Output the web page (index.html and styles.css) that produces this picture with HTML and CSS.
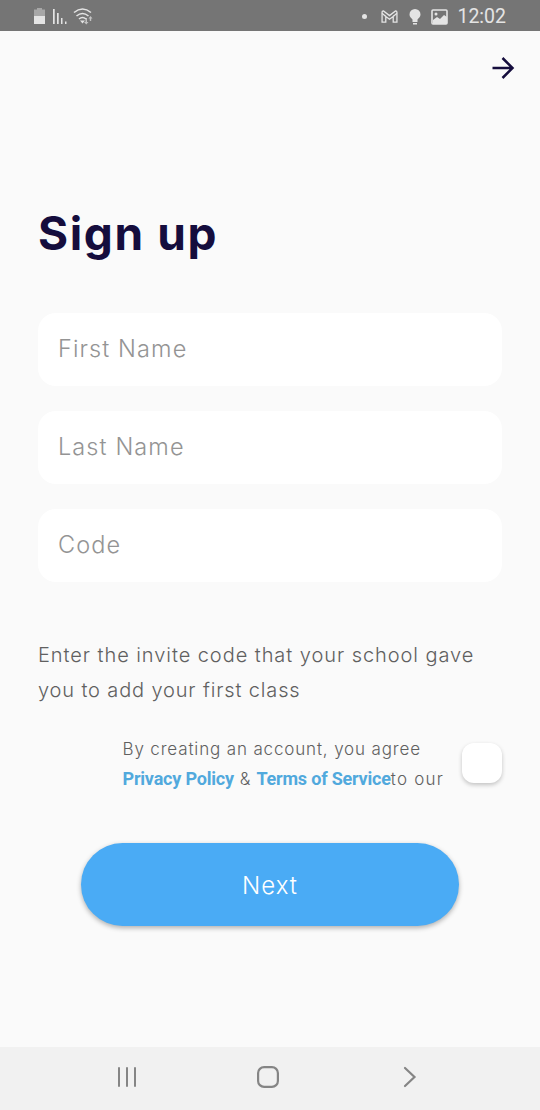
FILE: index.html
```html
<!DOCTYPE html>
<html lang="en">
<head>
    <meta charset="UTF-8">
    <meta name="viewport" content="width=device-width, initial-scale=1.0">
    <title>Sign up</title>
    <link rel="stylesheet" href="styles.css">
</head>
<body>
    <div class="status-bar">
        <div class="status-left">
            <svg width="62" height="18" viewBox="0 0 62 18" fill="#e4e4e4">
                <path d="M4 0h5v1.500h3V8H1V1.500h3z" opacity=".45"/>
                <path d="M1 8h11v8H1z"/>
                <path d="M20 1h1.700v15H20zM24 5h1.700v11H24zM28 10h1.500v6H28zM32 13.500h1.500V16H32z"/>
                <g fill="none" stroke="#e4e4e4" stroke-width="1.600">
                    <path d="M41 4.500q8.500-7 17 0M43.500 8q6-5 12 0M46 11q3.500-3 7 0"/>
                </g>
                <path d="M49.500 15.500l-2.500-3h5z"/>
                <path d="M52.500 10H54v4h1.500l-2.200 2.500L51 14h1.500zM57.500 8l2 2.500h-1.300V13h-1.400v-2.500h-1.300z" opacity=".7"/>
            </svg>
        </div>
        <div class="status-right">
            <span class="dot"></span>
            <svg class="mail" width="17" height="13" viewBox="0 0 18 14" fill="none" stroke="#e4e4e4" stroke-width="1.400">
                <path d="M1 2.500Q1 1 2.500 1L9 6l6.500-5Q17 1 17 2.500V13h-4V7L9 10 5 7v6H1z"/>
                <path d="M1 3.500L5 7M17 3.500L13 7"/>
            </svg>
            <svg class="bulb" width="12" height="16" viewBox="0 0 12 16" fill="#e4e4e4">
                <path d="M6 0a5.500 5.500 0 0 0-5.500 5.500C.5 7.500 2 9 3.500 10.500V13h5v-2.500C10 9 11.500 7.500 11.500 5.500A5.500 5.500 0 0 0 6 0zM4 14h4v1.500H4z"/>
            </svg>
            <svg class="photo" width="17" height="16" viewBox="0 0 17 16">
                <rect x="1" y="1" width="15" height="14" rx="1" fill="none" stroke="#e4e4e4" stroke-width="1.600"/>
                <circle cx="5" cy="5" r="1.500" fill="#e4e4e4"/>
                <path d="M2 11l4-3 3 2 4-4 3 2v7H2z" fill="#e4e4e4"/>
            </svg>
            <span class="clock">12:02</span>
        </div>
    </div>

    <main class="screen">
        <div class="top-nav">
            <svg width="24" height="24" viewBox="0 0 24 24" fill="none" stroke="#150d3d" stroke-width="2.500">
                <path d="M1.500 12h20M11.500 2l10 10-10 10"/>
            </svg>
        </div>

        <h1>Sign up</h1>

        <form id="signupForm">
            <input class="field" type="text" placeholder="First Name">
            <input class="field" type="text" placeholder="Last Name">
            <input class="field" type="text" placeholder="Code">

            <p class="hint"><span class="hint-first">Enter the invite code that your school gave</span><br><span class="hint-second">you to add your first class</span></p>

            <div class="terms">
                <p class="terms-text"><span class="agree">By creating an account, you agree</span><br><a class="link">Privacy Policy</a><span class="amp">&amp;</span><a class="link">Terms of Service</a><span class="our">to our</span></p>
                <span class="checkbox"></span>
            </div>

            <button type="button" class="next">Next</button>
        </form>
    </main>

    <nav class="nav-bar">
        <svg width="22" height="22" viewBox="0 0 22 22" fill="none" stroke="#858585" stroke-width="2">
            <path d="M3 2v18M11 2v18M19 2v18" stroke-linecap="round"/>
        </svg>
        <svg width="22" height="22" viewBox="0 0 22 22" fill="none" stroke="#858585" stroke-width="2.200">
            <rect x="1.100" y="1.100" width="19.800" height="19.800" rx="6"/>
        </svg>
        <svg width="22" height="22" viewBox="0 0 22 22" fill="none" stroke="#858585" stroke-width="2.200">
            <path d="M7 2l9.500 9L7 20" stroke-linecap="round"/>
        </svg>
    </nav>
</body>
</html>
```

FILE: styles.css
```css
* {
    box-sizing: border-box;
}
body {
    margin: 0;
    height: 1110px;
    display: flex;
    flex-direction: column;
    background-color: #fafafa;
    font-family: Inter, "Liberation Sans", sans-serif;
    font-weight: 300;
}
svg {
    display: block;
}

/* status bar */
.status-bar {
    height: 31px;
    padding: 0 34px 0 33px;
    display: flex;
    justify-content: space-between;
    background-color: #757575;
    color: #e4e4e4;
}
.status-left {
    padding-top: 8px;
}
.status-right {
    display: flex;
    align-items: center;
    padding-top: 2px;
}
.dot {
    width: 5px;
    height: 5px;
    border-radius: 50%;
    background-color: #e4e4e4;
    margin-right: 14px;
}
.mail {
    margin-right: 11px;
}
.bulb {
    margin-right: 10px;
}
.photo {
    margin-right: 9px;
}
.clock {
    font-family: Roboto, sans-serif;
    font-size: 19.5px;
    font-weight: 400;
    line-height: 28px;
}

/* sign up screen */
.screen {
    flex: 1;
    padding: 0 38px;
}
.top-nav {
    display: flex;
    justify-content: flex-end;
    padding-top: 25px;
    margin-right: -13px;
}
h1 {
    margin: 123px 0 0;
    height: 60px;
    font-size: 46px;
    line-height: 60px;
    font-weight: 700;
    letter-spacing: 1.6px;
    color: #150d3d;
}
form {
    padding-top: 50px;
}
.field {
    display: block;
    width: 100%;
    height: 73px;
    margin-bottom: 25px;
    padding: 0 20px 2px;
    border: none;
    border-radius: 18px;
    background-color: #fff;
    font-family: inherit;
    font-size: 23.5px;
    font-weight: 300;
    letter-spacing: 1.1px;
}
.field::placeholder {
    color: #949494;
    opacity: 1;
}
.hint {
    margin: 56px 0 0;
    font-size: 20px;
    line-height: 35px;
    color: #606060;
    white-space: nowrap;
}
.hint-first {
    letter-spacing: 0.94px;
}
.hint-second {
    letter-spacing: 0.86px;
}
.terms {
    display: flex;
    justify-content: space-between;
    align-items: flex-start;
    margin-top: 27px;
    padding-left: 84.5px;
}
.terms-text {
    margin: 0;
    font-size: 17px;
    line-height: 29px;
    color: #606060;
    white-space: nowrap;
}
.agree {
    letter-spacing: 0.85px;
}
.link {
    font-family: Roboto, sans-serif;
    font-size: 18px;
    font-weight: 700;
    letter-spacing: -0.2px;
    color: #51a9dd;
}
.amp {
    margin: 0 6px;
}
.our {
    letter-spacing: 1.2px;
}
.checkbox {
    width: 40px;
    height: 40px;
    margin-top: 8px;
    border-radius: 12px;
    background-color: #fff;
    box-shadow: 0 2px 4px rgba(0, 0, 0, 0.22);
}
.next {
    display: block;
    width: 378px;
    height: 83px;
    margin: 49px auto 0;
    padding: 2px 0 0;
    border: none;
    border-radius: 42px;
    background-color: #4aabf5;
    box-shadow: 0 2px 5px rgba(0, 0, 0, 0.3);
    color: #fff;
    font-family: inherit;
    font-size: 24px;
    font-weight: 300;
    letter-spacing: 1px;
}

/* bottom navigation */
.nav-bar {
    height: 63px;
    padding: 0 120px 3px 116px;
    display: flex;
    justify-content: space-between;
    align-items: center;
    background-color: #f1f1f1;
}
```
